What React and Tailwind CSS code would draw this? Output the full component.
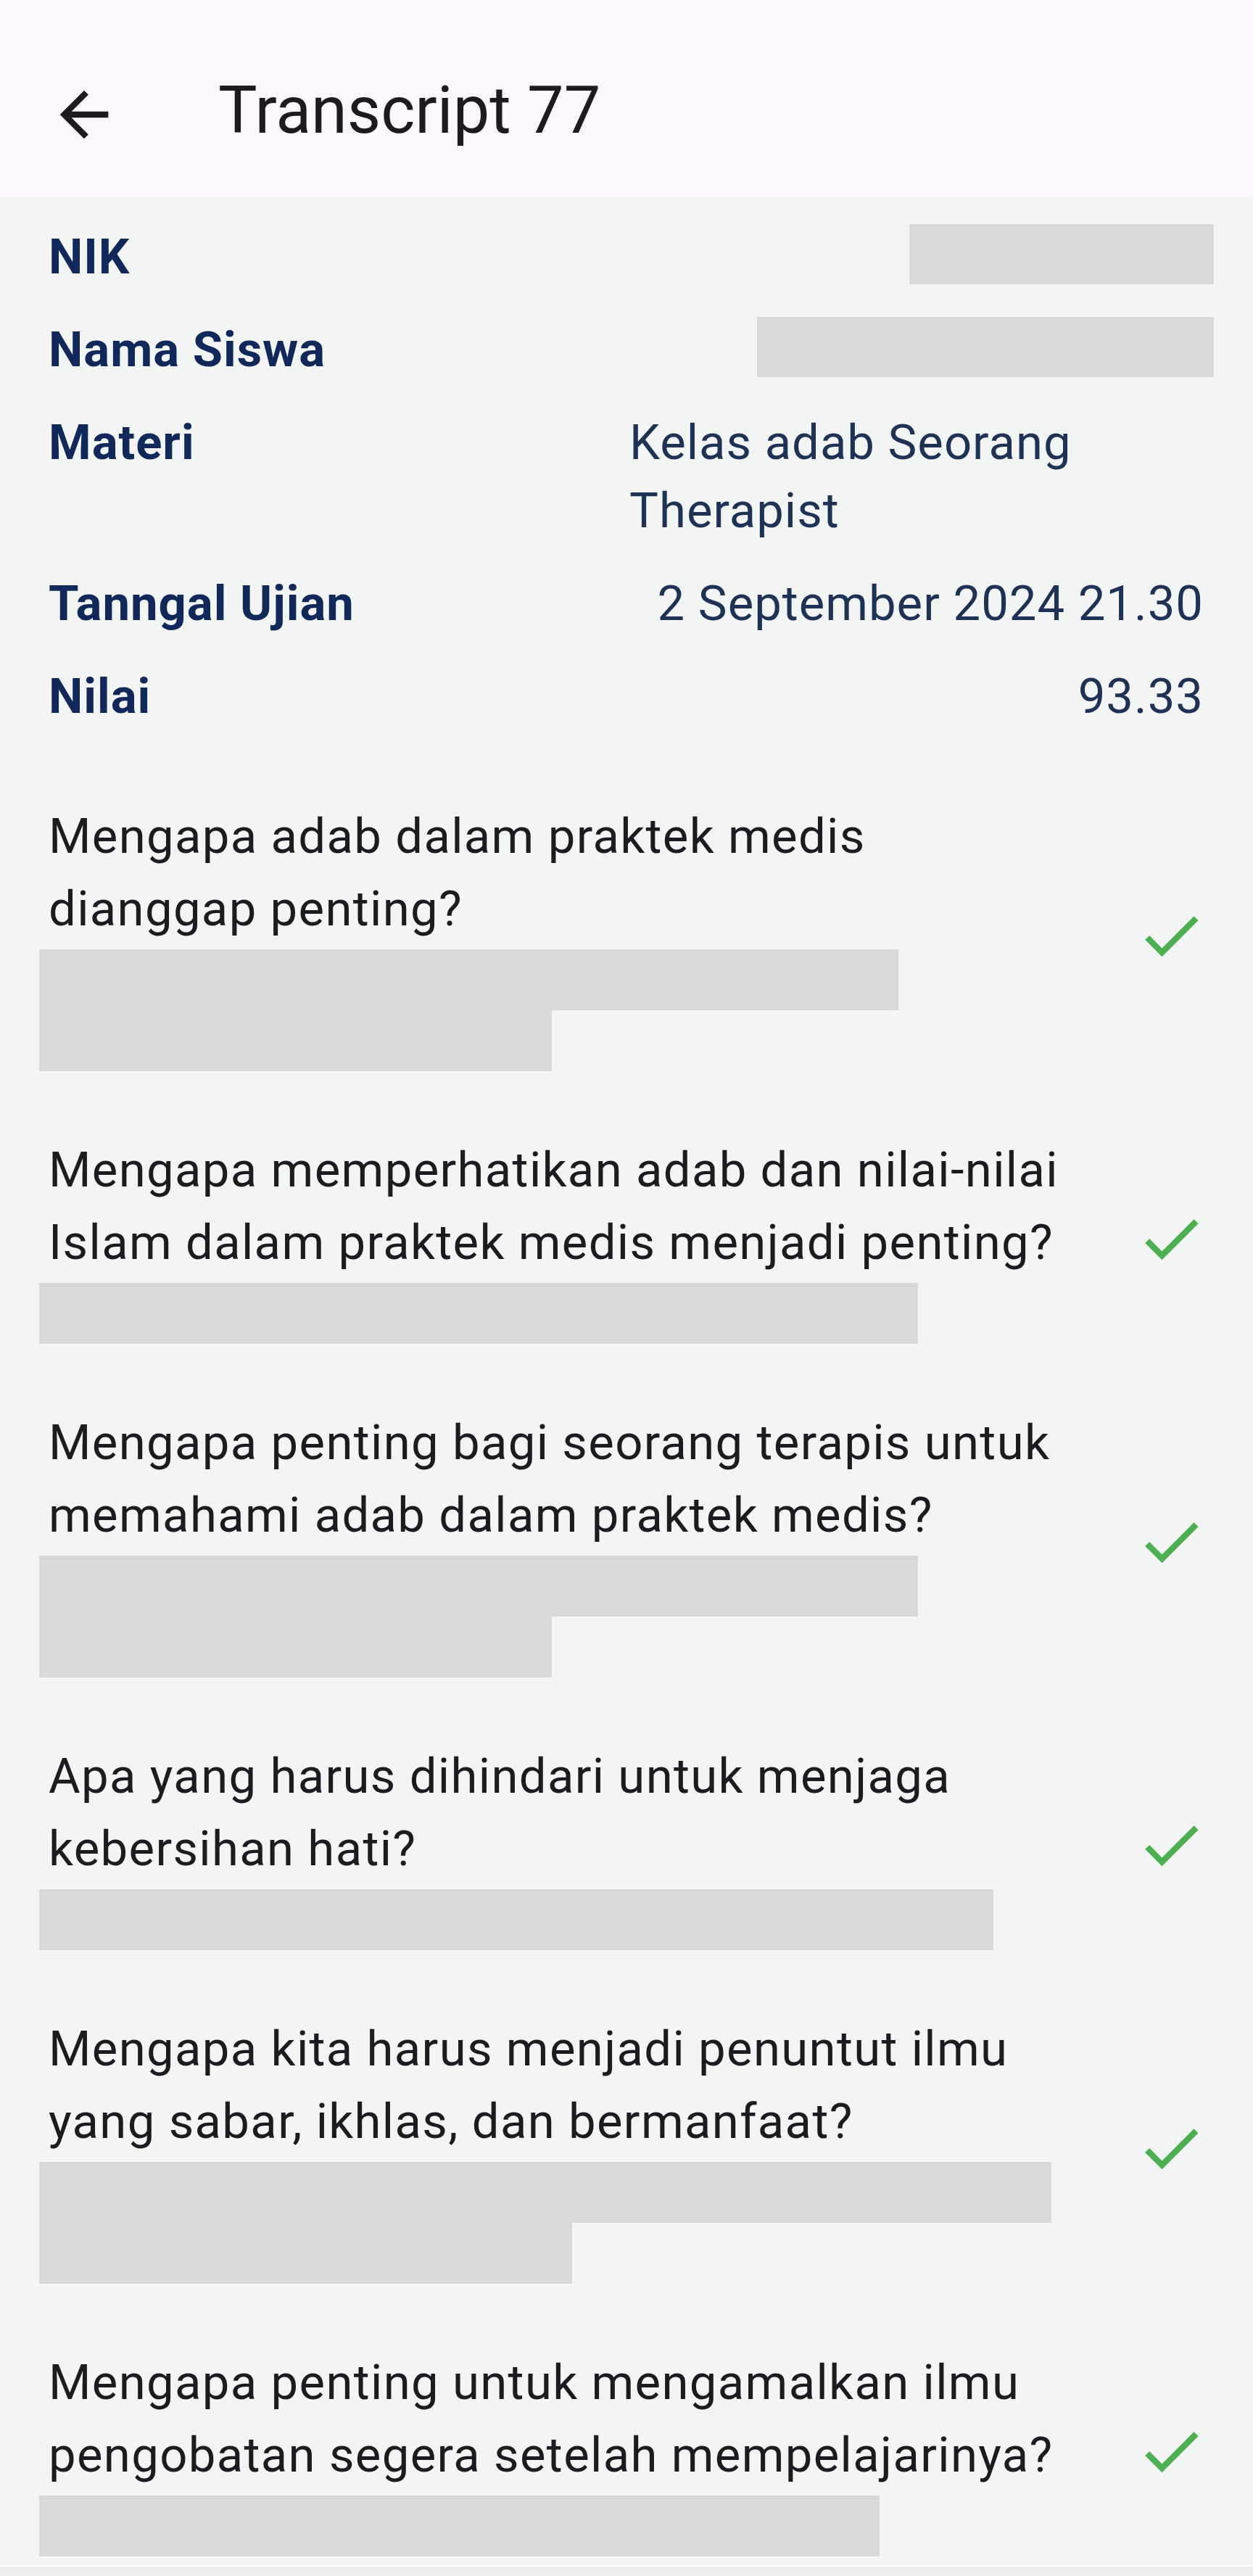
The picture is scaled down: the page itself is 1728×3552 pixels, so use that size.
import React from "react";

const info = [
  { label: "NIK", redact: 420 },
  { label: "Nama Siswa", redact: 630 },
  { label: "Materi", value: "Kelas adab Seorang Therapist" },
  { label: "Tanngal Ujian", value: "2 September 2024 21.30" },
  { label: "Nilai", value: "93.33" },
];

const questions = [
  { q: "Mengapa adab dalam praktek medis dianggap penting?", bars: [1185, 707] },
  { q: "Mengapa memperhatikan adab dan nilai-nilai Islam dalam praktek medis menjadi penting?", bars: [1212] },
  { q: "Mengapa penting bagi seorang terapis untuk memahami adab dalam praktek medis?", bars: [1212, 707] },
  { q: "Apa yang harus dihindari untuk menjaga kebersihan hati?", bars: [1316] },
  { q: "Mengapa kita harus menjadi penuntut ilmu yang sabar, ikhlas, dan bermanfaat?", bars: [1396, 735] },
  { q: "Mengapa penting untuk mengamalkan ilmu pengobatan segera setelah mempelajarinya?", bars: [1159] },
];

const BackArrow = () => (
  <svg viewBox="0 0 24 24" className="w-[100px] h-[100px] shrink-0" fill="#1d1b20">
    <path d="M20 11H7.83l5.59-5.59L12 4l-8 8 8 8 1.41-1.41L7.83 13H20v-2z" />
  </svg>
);

const Check = () => (
  <svg viewBox="0 0 24 24" className="w-[100px] h-[100px] shrink-0" fill="#4caf50">
    <path d="M9 16.17 4.83 12l-1.42 1.41L9 19 21 7l-1.41-1.41z" />
  </svg>
);

const App = () => {
  return (
    <div className="h-[3552px] overflow-hidden flex flex-col bg-[#f2f5f4] font-['Roboto',sans-serif]">
      {/* App bar */}
      <div className="h-[272px] shrink-0 bg-[#fdf7fd] pt-[44px]">
        <div className="h-[228px] flex items-center pl-[66px] gap-[135px]">
          <BackArrow />
          <h1 className="text-[90px] text-[#1d1b20] mb-[11px]">Transcript 77</h1>
        </div>
      </div>

      <div className="flex-1 min-h-0">
        {/* Header info */}
        <div className="px-[67px] pr-[68px] pt-[35px] pb-[53px] flex flex-col gap-[34px] text-[67px] leading-[94px] tracking-[1px]">
          {info.map((row) => (
            <div key={row.label} className="flex justify-between items-start">
              <span className="font-bold text-[#10295a] whitespace-nowrap">{row.label}</span>
              {row.redact ? (
                <div className="h-[83px] mt-[2px] -mr-[14px] bg-[#d9d9d9]" style={{ width: row.redact }} />
              ) : (
                <div className="max-w-[792px] text-[#1e3256]">{row.value}</div>
              )}
            </div>
          ))}
        </div>

        {/* Answers */}
        {questions.map((item, i) => (
          <div key={i} className="flex items-center gap-[84px] pl-[67px] pr-[63px] py-[43px]">
            <div className="flex-1 min-w-0">
              <p className="text-[67px] leading-[100px] tracking-[1.35px] text-[#1d1b20]">{item.q}</p>
              <div className="-ml-[13px] mt-[6px]">
                {item.bars.map((w, j) => (
                  <div key={j} className="h-[84px] bg-[#d9d9d9]" style={{ width: w }} />
                ))}
              </div>
            </div>
            <Check />
          </div>
        ))}
      </div>

      <div className="h-[15px] shrink-0 border-t-2 border-white bg-[#eceeed]" />
    </div>
  );
};

export default App;
